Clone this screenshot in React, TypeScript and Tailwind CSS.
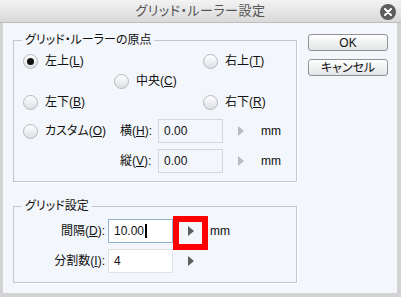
import React from "react";

function Radio({ checked = false }: { checked?: boolean }) {
  return (
    <span className="w-[15px] h-[15px] rounded-full border border-[#b4b8bd] bg-linear-to-b from-[#ffffff] to-[#dcdfe3] flex items-center justify-center shrink-0">
      {checked && <span className="w-[7px] h-[7px] rounded-full bg-[#111]" />}
    </span>
  );
}

function RadioItem({ label, k, checked = false, className = "" }: { label: string; k: string; checked?: boolean; className?: string }) {
  return (
    <span className={"flex items-center " + className}>
      <Radio checked={checked} />
      <span className="ml-[7px] text-[12px] leading-[14px] text-[#111]">
        {label}(<u>{k}</u>)
      </span>
    </span>
  );
}

function Arrow({ dark = false }: { dark?: boolean }) {
  return (
    <svg width="6" height="10" viewBox="0 0 6 10" className="shrink-0">
      <polygon points="0,0 6,5 0,10" fill={dark ? "#5e5e5e" : "#b8bcc0"} />
    </svg>
  );
}

export default function App() {
  return (
    <div className="w-[401px] h-[297px] flex flex-col overflow-hidden font-['Liberation_Sans','Noto_Sans_CJK_JP',sans-serif] [font-feature-settings:'palt'] text-[#111]">
      {/* Title bar */}
      <div className="h-[23px] shrink-0 grid grid-cols-[1fr_auto_1fr] items-center bg-linear-to-b from-[#f3f3f3] to-[#d9d9d9] border-b border-[#bdbdbd]">
        <div />
        <div className="text-[13px] leading-[16px] text-[#545454] tracking-[0.5px]">グリッド・ルーラー設定</div>
        <div className="justify-self-end pr-[5px] pt-[2px]">
          <span className="w-[16px] h-[16px] rounded-full bg-[#5d5d5d] flex items-center justify-center">
            <svg width="8" height="8" viewBox="0 0 8 8">
              <path d="M1 1 L7 7 M7 1 L1 7" stroke="#fff" strokeWidth="2" strokeLinecap="round" />
            </svg>
          </span>
        </div>
      </div>

      {/* Body */}
      <div className="flex-1 flex bg-[#f3f6fa] border-l-[3px] border-r-[4px] border-b-[4px] border-[#d3d3d3]">
        {/* Left column */}
        <div className="w-[294px] pl-[10px] pt-[10px] flex flex-col">
          <fieldset className="w-[284px] border border-[#c3c6ca] shadow-[1px_1px_0_#ffffff] pb-[8px]">
            <legend className="ml-[8px] px-[3px] text-[12px] leading-[14px]">グリッド・ルーラーの原点</legend>
            <div className="mt-[4px] h-[20px] flex items-center pl-[9px]">
              <RadioItem label="左上" k="L" checked className="w-[180px]" />
              <RadioItem label="右上" k="T" />
            </div>
            <div className="h-[20px] flex items-center pl-[100px]">
              <RadioItem label="中央" k="C" />
            </div>
            <div className="mt-[1px] h-[20px] flex items-center pl-[9px]">
              <RadioItem label="左下" k="B" className="w-[180px]" />
              <RadioItem label="右下" k="R" />
            </div>
            <div className="mt-[7px] h-[24px] flex items-center pl-[9px]">
              <RadioItem label="カスタム" k="O" className="w-[97px]" />
              <span className="w-[38px] text-[12px] leading-[14px]">横(<u>H</u>):</span>
              <span className="w-[65px] h-[24px] border border-[#d3d6da] flex items-center pl-[5px] text-[12px] leading-[14px]">0.00</span>
              <span className="ml-[15px]"><Arrow /></span>
              <span className="ml-[17px] text-[12px] leading-[14px]">mm</span>
            </div>
            <div className="mt-[6px] h-[24px] flex items-center pl-[106px]">
              <span className="w-[38px] text-[12px] leading-[14px]">縦(<u>V</u>):</span>
              <span className="w-[65px] h-[24px] border border-[#d3d6da] flex items-center pl-[5px] text-[12px] leading-[14px]">0.00</span>
              <span className="ml-[15px]"><Arrow /></span>
              <span className="ml-[17px] text-[12px] leading-[14px]">mm</span>
            </div>
          </fieldset>

          <fieldset className="mt-[17px] w-[284px] border border-[#c3c6ca] shadow-[1px_1px_0_#ffffff] pb-[9px]">
            <legend className="ml-[8px] px-[3px] text-[12px] leading-[14px]">グリッド設定</legend>
            <div className="mt-[6px] h-[24px] flex items-center">
              <span className="w-[94px] pr-[3px] text-right text-[12px] leading-[14px]">間隔(<u>D</u>):</span>
              <span className="w-[65px] h-[24px] border border-[#8fb3d1] bg-white flex items-center pl-[5px] text-[12px] leading-[14px]">
                10.00<span className="ml-[1px] w-[2px] h-[14px] bg-black" />
              </span>
              <span className="relative w-[35px] h-[24px] flex items-center justify-center">
                <Arrow dark />
                <span className="absolute left-0 top-[-3px] w-[35px] h-[34px] border-[6px] border-[#ff0000]" />
              </span>
              <span className="ml-[2px] text-[12px] leading-[14px]">mm</span>
            </div>
            <div className="mt-[6px] h-[24px] flex items-center">
              <span className="w-[94px] pr-[3px] text-right text-[12px] leading-[14px]">分割数(<u>I</u>):</span>
              <span className="w-[65px] h-[24px] border border-[#dfe2e5] bg-white flex items-center pl-[5px] text-[12px] leading-[14px]">4</span>
              <span className="w-[35px] h-[24px] flex items-center justify-center">
                <Arrow dark />
              </span>
            </div>
          </fieldset>
        </div>

        {/* Right column */}
        <div className="pl-[11px] pt-[11px] flex flex-col">
          <button className="w-[80px] h-[17px] rounded-[3px] border border-[#8f9194] bg-linear-to-b from-[#ffffff] to-[#e2e4e6] text-[12px] leading-[14px] flex items-center justify-center">OK</button>
          <button className="mt-[8px] w-[80px] h-[17px] rounded-[3px] border border-[#8f9194] bg-linear-to-b from-[#ffffff] to-[#e2e4e6] text-[12px] leading-[14px] flex items-center justify-center">キャンセル</button>
        </div>
      </div>
    </div>
  );
}
